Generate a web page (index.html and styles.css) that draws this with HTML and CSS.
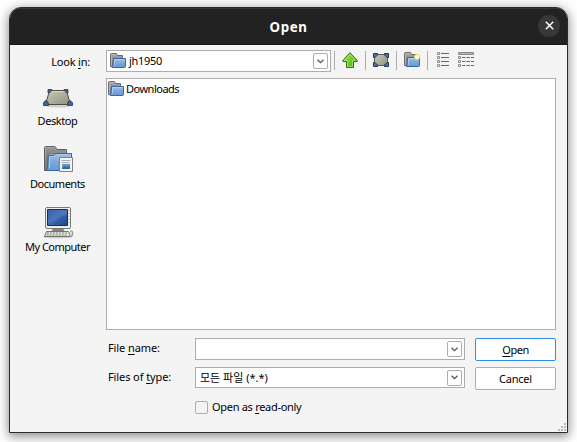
FILE: index.html
```html
<!DOCTYPE html>
<html lang="en">
<head>
<meta charset="utf-8">
<title>Open</title>
<link rel="stylesheet" href="styles.css">
</head>
<body>
<svg width="0" height="0" class="defs" aria-hidden="true">
  <defs>
    <linearGradient id="blue" x1="0" y1="0" x2="0" y2="1"><stop offset="0" stop-color="#a2c3ea"/><stop offset=".5" stop-color="#7ca8da"/><stop offset="1" stop-color="#6799d5"/></linearGradient>
    <linearGradient id="grey" x1="0" y1="0" x2="0" y2="1"><stop offset="0" stop-color="#aaa"/><stop offset="1" stop-color="#747474"/></linearGradient>
    <linearGradient id="desk" x1="0" y1="0" x2="1" y2="1"><stop offset="0" stop-color="#c7cab7"/><stop offset="1" stop-color="#90937e"/></linearGradient>
    <linearGradient id="screen" x1="0" y1="0" x2="1" y2="1"><stop offset="0" stop-color="#2a4a94"/><stop offset=".5" stop-color="#3d67b0"/><stop offset="1" stop-color="#1e438c"/></linearGradient>
    <linearGradient id="green" x1="0" y1="0" x2="1" y2="1"><stop offset="0" stop-color="#a1e45e"/><stop offset="1" stop-color="#46b000"/></linearGradient>
    <symbol id="folder" viewBox="0 0 16 16">
      <path d="M.5 13.500V1.500Q.5.500 1.500.500H6.500L7.500 2.500H12.500V6.500H3.500V13.500Z" fill="url(#grey)" stroke="#6b6b6b"/>
      <path d="M1.500 2V13M2 1.500H6" stroke="#c4c4c4" opacity=".7"/>
      <path d="M3.500 5.500H15.500V13.500Q15.500 14.500 14.500 14.500H2.500Q1.500 14.500 2 13.500L3 12.500Z" fill="url(#blue)" stroke="#3465a4"/>
      <path d="M4.500 13V6.500H14.500" fill="none" stroke="#c2dafa" opacity=".65"/>
    </symbol>
  </defs>
</svg>
<main class="window">
  <header class="titlebar">
    <h1>Open</h1>
    <button class="close" aria-label="Close"><svg width="9" height="9" viewBox="0 0 9 9"><path d="M.8.800 8.200 8.200M8.200.800.8 8.200" stroke="#fff" stroke-width="1.500"/></svg></button>
  </header>
  <div class="content">
    <aside class="sidebar">
      <label class="look">Look <u>i</u>n:</label>
      <div class="place desktop">
        <svg width="32" height="32" viewBox="0 0 32 32">
          <ellipse cx="16" cy="24.500" rx="13" ry="2" fill="#d4cfcf"/>
          <path d="M7.500 9.500H24.500L28.500 23.500H3.500Z" fill="url(#desk)" stroke="#4b4d46"/>
          <path d="M8 10.500H24" stroke="#d7d9cb"/>
          <g fill="#466197" stroke="#263957" stroke-width=".8"><path d="M6 8.500H10L8.500 11 6 12ZM22 8.500H26V12L23.500 11ZM3.500 19.500Q6.500 20 6.500 23V24.500H1.500V21.500ZM28 19.500Q25 20 25.500 24.500H30.500V21.500Z"/></g>
        </svg>
        <span>Desktop</span>
      </div>
      <div class="place documents">
        <svg width="32" height="32" viewBox="0 0 32 32">
          <path d="M2.500 26.500V3.500Q2.500 2.500 3.500 2.500H13L15 5.500H24.500V10H6V26.500Z" fill="url(#grey)" stroke="#5e5e5e"/>
          <path d="M4 5H13M4 7H23M4 9H23M4 11H6M4 14H6M4 17H6M4 20H6M4 23H6" stroke="#666" opacity=".6"/>
          <path d="M6.500 11.500H12L14 9.500H29.500V25.500Q29.500 26.500 28 26.500H3.500Q5 26 5.500 24Z" fill="url(#blue)" stroke="#3465a4"/>
          <path d="M7.500 24V12.500H12.500L14.500 10.500H28.500" fill="none" stroke="#a8caf0"/>
          <path d="M17.500 13.500H30.500V27.500H17.500Z" fill="#f4f4f4" stroke="#818181"/>
          <path d="M19.500 16.500H28.500M19.500 18.500H27.500" stroke="#aaa"/>
          <path d="M20 20H28V25H20Z" fill="#5e94c8"/><path d="M20 24 23 22 25 23.500 28 21.500V25H20Z" fill="#346799"/>
        </svg>
        <span>Documents</span>
      </div>
      <div class="place computer">
        <svg width="32" height="32" viewBox="0 0 32 32">
          <ellipse cx="16" cy="30" rx="15" ry="1.500" fill="#ccc"/>
          <path d="M4.500.500H27.500Q28.500.500 28.500 2V20.500Q28.500 21.500 27 21.500H5Q3.500 21.500 3.500 20V2Q3.500.500 4.500.500Z" fill="#eeeeea" stroke="#777974"/>
          <path d="M5.500 2.500H25.500V18.500H5.500Z" fill="url(#screen)" stroke="#172f60"/>
          <path d="M6 3H25V8Q17 9 14 13 11 16 6 16Z" fill="#8aabe0" opacity=".22"/>
          <path d="M27 3V18" stroke="#aaa" stroke-dasharray="1 2"/>
          <path d="M11 22H21L22 24H10Z" fill="#8c8e88" stroke="#666" stroke-width=".5"/>
          <path d="M4.500 24.500H26.500L28.500 29.500H2.500Z" fill="#e2e3df" stroke="#737570"/>
          <path d="M5 26H25M4.500 28H25" stroke="#868882" stroke-dasharray="2 1"/>
          <path d="M28 24Q31 23.500 31 26L30 29H28" fill="#ddd" stroke="#888"/>
        </svg>
        <span>My Computer</span>
      </div>
    </aside>
    <section class="browser">
      <div class="toolbar">
        <div class="combo lookin"><svg class="folder" width="16" height="16"><use href="#folder"/></svg><span class="path">jh1950</span><i class="drop"><svg width="7" height="5" viewBox="0 0 7 5"><path d="M.5.700 3.500 3.700 6.500.700" fill="none" stroke="#555" stroke-width="1.300"/></svg></i></div>
        <i class="sep"></i>
        <svg class="tool" width="16" height="16" viewBox="0 0 16 16"><path d="M8 .7 15.200 8.500V9.500H11.500V15.500H4.500V9.500H.8V8.500Z" fill="url(#green)" stroke="#3a7304"/><path d="M2.500 8.500 8 2.300 13.500 8.500H10.500V14.500H5.500V8.500Z" fill="none" stroke="#c5f29b" opacity=".55"/></svg>
        <i class="sep"></i>
        <svg class="tool" width="16" height="16" viewBox="0 0 16 16"><path d="M4.500 2.500H11.500L14.500 5.500V10.500L11.500 13.500H4.500L1.500 10.500V5.500Z" fill="url(#desk)" stroke="#565b50"/><path d="M.5 1.500H4.500V3L2 5.500H.5ZM11.500 1.500H15.500V5.500H14L11.500 3ZM.5 10.500H2L4.500 13V14.500H.5ZM14 10.500H15.500V14.500H11.500V13Z" fill="#5370a1" stroke="#26374f"/></svg>
        <i class="sep"></i>
        <svg class="tool" width="16" height="16" viewBox="0 0 16 16"><use href="#folder"/><circle cx="13" cy="5" r="3" fill="#eee15b" opacity=".9"/><path d="M13 3V7M11 5H15" stroke="#fffde0" stroke-width="2"/></svg>
        <i class="sep"></i>
        <svg class="list" width="12" height="16" viewBox="0 0 12 16"><path d="M4 1.500H12M4 5.500H12M4 9.500H12M4 13.500H12" stroke="#666960"/><path d="M.5.500H2.500V2.500H.5ZM.5 4.500H2.500V6.500H.5ZM.5 8.500H2.500V10.500H.5ZM.5 12.500H2.500V14.500H.5Z" fill="#eee" stroke="#8b8d87"/></svg>
        <svg class="details" width="16" height="16" viewBox="0 0 16 16"><path d="M.5.500H15.500V2.500H.5Z" fill="#b5b7ad" stroke="#8b8d83"/><path d="M4 5.500H16M4 9.500H16M4 13.500H16" stroke="#666960" stroke-dasharray="3.500 1"/><path d="M.5 4.500H2.500V6.500H.5ZM.5 8.500H2.500V10.500H.5ZM.5 12.500H2.500V14.500H.5Z" fill="#eee" stroke="#8b8d87"/></svg>
      </div>
      <div class="files"><div class="file"><svg width="16" height="16"><use href="#folder"/></svg><span>Downloads</span></div></div>
      <div class="form">
        <label class="name-label">File <u>n</u>ame:</label>
        <div class="combo"><i class="drop"><svg width="7" height="5" viewBox="0 0 7 5"><path d="M.5.700 3.500 3.700 6.500.700" fill="none" stroke="#555" stroke-width="1.300"/></svg></i></div>
        <button class="btn primary"><span><u>O</u>pen</span></button>
        <label class="type-label">Files of <u>t</u>ype:</label>
        <div class="combo type"><span class="filter">모든 파일 (*.*)</span><i class="drop"><svg width="7" height="5" viewBox="0 0 7 5"><path d="M.5.700 3.500 3.700 6.500.700" fill="none" stroke="#555" stroke-width="1.300"/></svg></i></div>
        <button class="btn"><span>Cancel</span></button>
      </div>
      <div class="readonly"><i class="check"></i><span>Open as <u>r</u>ead-only</span></div>
    </section>
    <svg class="grip" width="8" height="8" viewBox="0 0 8 8" fill="#b8b8b8"><path d="M6 0H8V2H6ZM3 3H5V5H3ZM6 3H8V5H6ZM0 6H2V8H0ZM3 6H5V8H3ZM6 6H8V8H6Z"/></svg>
  </div>
</main>
</body>
</html>
```
FILE: styles.css
```css
* { box-sizing: border-box; }
body {
  margin: 0;
  width: 577px;
  height: 442px;
  padding: 7px 9px 9px;
  overflow: hidden;
  background: #fff;
  color: #000;
  font: 11px/16px "Noto Sans", "Noto Sans CJK KR", sans-serif;
}
.defs { position: absolute; }
svg { display: block; flex: none; }
u { text-decoration-thickness: 1px; text-underline-offset: 2px; text-decoration-skip-ink: none; }
.window {
  width: 559px;
  height: 426px;
  display: flex;
  flex-direction: column;
  border: 1px solid #2d2a2d;
  border-radius: 12px 12px 0 0;
  background: #f4f4f4;
  box-shadow: 0 3px 10px 1px rgba(0, 0, 0, .36), 0 0 18px rgba(0, 0, 0, .12);
  overflow: hidden;
}
.titlebar {
  height: 37px;
  flex: none;
  display: grid;
  grid-template-columns: 1fr auto 1fr;
  align-items: center;
  background: #222;
  box-shadow: inset 0 1px #353535, inset 0 -1px #191919;
}
h1 {
  grid-column: 2;
  margin: 0;
  color: #fff;
  font: bold 13.3px/18px "Noto Sans", sans-serif;
  letter-spacing: .6px;
}
.close {
  justify-self: end;
  width: 22px;
  height: 22px;
  margin: 0 7px 2px 0;
  padding: 0;
  border: 0;
  border-radius: 50%;
  background: #373737;
  display: grid;
  place-items: center;
}
.content { position: relative; display: flex; flex: 1; }
.sidebar { width: 96px; padding: 9px 1px 0 0; display: flex; flex-direction: column; }
.look { padding-right: 15px; text-align: right; height: 16px; letter-spacing: -.2px; }
.place { display: flex; flex-direction: column; align-items: center; height: 63px; letter-spacing: -.5px; }
.desktop { margin-top: 11px; letter-spacing: -.4px; }
.browser { width: 450px; padding-top: 5px; display: flex; flex-direction: column; }
.toolbar { display: flex; height: 22px; align-items: flex-start; }
.combo {
  display: flex;
  align-items: center;
  height: 22px;
  border: 1px solid #adadad;
  background: #fff;
}
.lookin { width: 225px; padding-left: 3px; margin-right: 3px; }
.lookin .path { margin-left: 3px; letter-spacing: -.3px; }
.drop {
  width: 15px;
  height: 16px;
  margin: 0 2px 0 auto;
  border: 1px solid #adadad;
  border-radius: 2px;
  display: grid;
  place-items: center;
}
.sep { width: 1px; height: 19px; margin-top: 1px; background: #adadad; }
.tool { margin: 2px 7px 0; }
.list { margin: 2px 0 0 9px; }
.details { margin: 2px 0 0 9px; }
.files { height: 252px; margin-top: 6px; padding: 2px 1px; border: 1px solid #adadad; background: #fff; }
.file { display: flex; gap: 2px; letter-spacing: -.5px; }
.form {
  margin-top: 8px;
  display: grid;
  grid-template-columns: 89px 270px 81px;
  grid-template-rows: 23px 23px;
  row-gap: 6px;
}
.form label { padding: 2px 0 0 2px; letter-spacing: -.1px; }
.form .btn { margin-left: 10px; width: 81px; }
.type { height: 21px; padding-left: 4px; }
.btn {
  height: 23px;
  padding: 0;
  border: 1px solid #adadad;
  border-radius: 2px;
  background: #fff;
  color: #000;
  font: inherit;
  letter-spacing: -.2px;
}
.primary { border-color: #308cee; letter-spacing: -.5px; }
.readonly { margin: 9px 0 0 89px; display: flex; gap: 4px; align-items: center; letter-spacing: -.3px; }
.check { width: 13px; height: 13px; border: 1px solid #adadad; border-radius: 2px; }
.grip { position: absolute; right: 1px; bottom: 1px; }
```
